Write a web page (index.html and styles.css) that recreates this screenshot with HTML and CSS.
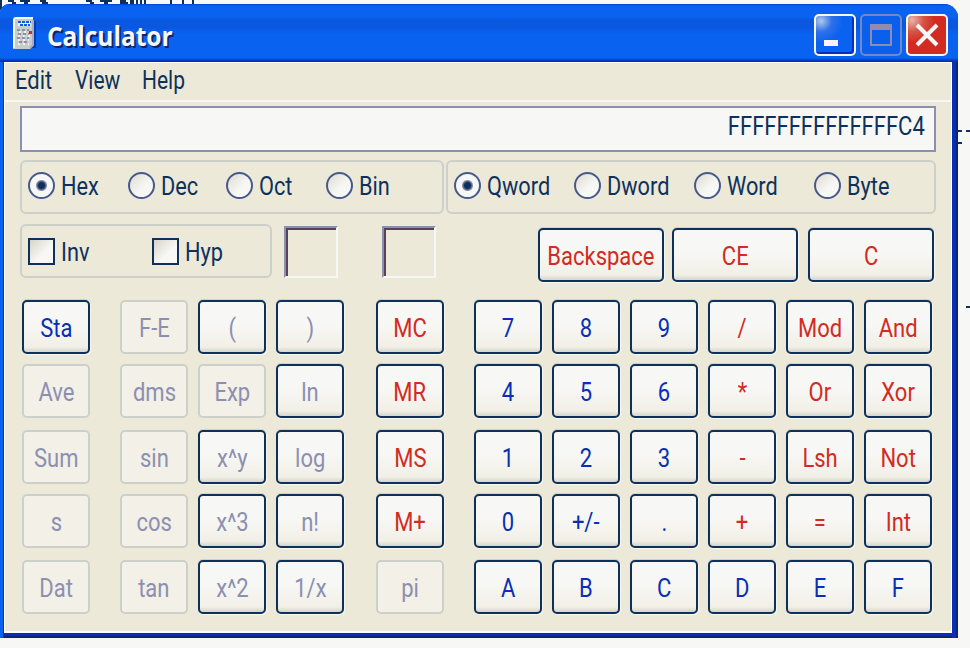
FILE: index.html
```
<!DOCTYPE html>
<html lang="en">
<head>
<meta charset="utf-8">
<title>Calculator</title>
<link rel="stylesheet" href="styles.css">
</head>
<body>
<svg class="backdrop" width="970" height="648" viewBox="0 0 970 648" shape-rendering="crispEdges"><path d="M0 0h2v10h-2zM8 0h6v2h-6zM12 2h4v2h-4zM20 0h10v2h-10zM24 2h4v2h-4zM40 0h6v2h-6zM42 2h6v2h-6zM86 0h6v2h-6zM90 2h4v2h-4zM100 0h12v2h-12zM104 2h4v2h-4zM120 0h6v4h-6zM122 2h6v2h-6zM130 0h4v4h-4zM136 0h2v4h-2zM140 0h2v4h-2zM144 0h2v4h-2zM170 0h2v4h-2zM182 0h2v4h-2zM192 0h2v4h-2zM958 130h4v2h-4zM966 130h4v2h-4zM958 142h4v2h-4zM966 306h4v2h-4z" fill="#0e315c"/></svg>
<main class="window">
<header class="titlebar">
<svg class="appicon" width="25" height="34" viewBox="0 0 25 34"><path d="M4 4H24V31H4Z" fill="#0a3ab8"/><path d="M2 3Q2 1 4 1H21V28L18 32H1Z" fill="#c8cccb"/><path d="M2 31V3Q2 1 4 1H21" fill="none" stroke="#f7f7f5" stroke-width="2"/><path d="M21 3V28L18 31" fill="none" stroke="#a9adba" stroke-width="2"/><path d="M6 4H19V9H6Z" fill="#eef2f5"/><path d="M6 5H19M8 8H18" stroke="#0b5ce8" stroke-width="2" stroke-dasharray="3 1"/><path d="M5 13H17M6 17H17M5 21H17M7 25H17" stroke="#8b90ae" stroke-width="2" stroke-dasharray="3 2"/><path d="M7 15H17M6 19H19M6 23H17M6 27H17" stroke="#f0f0ee" stroke-width="2" stroke-dasharray="2 3"/><path d="M17 14h3v3h-3z" fill="#d12b22"/></svg>
<h1>Calculator</h1>
<div class="controls">
<button class="ctl" aria-label="Minimize"><svg width="38" height="38"><path d="M8 24h14v6H8z" fill="#f7f7f5"/></svg></button>
<button class="ctl max" aria-label="Maximize"><svg width="38" height="38"><path d="M8 8h22v6H8z" fill="#8c8fac"/><path d="M9 12v17h20V12" fill="none" stroke="#8c8fac" stroke-width="2"/></svg></button>
<button class="ctl close" aria-label="Close"><svg width="38" height="38"><path d="M9 9L29 29M29 9L9 29" stroke="#f7f7f5" stroke-width="4"/></svg></button>
</div>
</header>
<div class="body">
<nav class="menu"><span class="t">Edit</span><span class="t">View</span><span class="t">Help</span></nav>
<div class="display"><span class="t">FFFFFFFFFFFFFFC4</span></div>
<div class="modes">
<div class="group base"><label><i class="radio on"></i><span class="t">Hex</span></label><label><i class="radio"></i><span class="t">Dec</span></label><label><i class="radio"></i><span class="t">Oct</span></label><label><i class="radio"></i><span class="t">Bin</span></label></div>
<div class="group size"><label><i class="radio on"></i><span class="t">Qword</span></label><label><i class="radio"></i><span class="t">Dword</span></label><label><i class="radio"></i><span class="t">Word</span></label><label><i class="radio"></i><span class="t">Byte</span></label></div>
</div>
<div class="tools">
<div class="group flags"><label><i class="check"></i><span class="t">Inv</span></label><label><i class="check"></i><span class="t">Hyp</span></label></div>
<i class="well"></i><i class="well second"></i>
<div class="edit"><button class="key red"><span>Backspace</span></button><button class="key red"><span>CE</span></button><button class="key red"><span>C</span></button></div>
</div>
<div class="keys">
<button class="key"><span>Sta</span></button><button class="key off"><span>F-E</span></button><button class="key dim"><span>(</span></button><button class="key dim"><span>)</span></button><button class="key red"><span>MC</span></button><button class="key"><span>7</span></button><button class="key"><span>8</span></button><button class="key"><span>9</span></button><button class="key red"><span>/</span></button><button class="key red"><span>Mod</span></button><button class="key red"><span>And</span></button>
<button class="key off"><span>Ave</span></button><button class="key off"><span>dms</span></button><button class="key off"><span>Exp</span></button><button class="key dim"><span>ln</span></button><button class="key red"><span>MR</span></button><button class="key"><span>4</span></button><button class="key"><span>5</span></button><button class="key"><span>6</span></button><button class="key red"><span>*</span></button><button class="key red"><span>Or</span></button><button class="key red"><span>Xor</span></button>
<button class="key off"><span>Sum</span></button><button class="key off"><span>sin</span></button><button class="key dim"><span>x^y</span></button><button class="key dim"><span>log</span></button><button class="key red"><span>MS</span></button><button class="key"><span>1</span></button><button class="key"><span>2</span></button><button class="key"><span>3</span></button><button class="key red"><span>-</span></button><button class="key red"><span>Lsh</span></button><button class="key red"><span>Not</span></button>
<button class="key off"><span>s</span></button><button class="key off"><span>cos</span></button><button class="key dim"><span>x^3</span></button><button class="key dim"><span>n!</span></button><button class="key red"><span>M+</span></button><button class="key"><span>0</span></button><button class="key"><span>+/-</span></button><button class="key"><span>.</span></button><button class="key red"><span>+</span></button><button class="key red"><span>=</span></button><button class="key red"><span>Int</span></button>
<button class="key off"><span>Dat</span></button><button class="key off"><span>tan</span></button><button class="key dim"><span>x^2</span></button><button class="key dim"><span>1/x</span></button><button class="key off"><span>pi</span></button><button class="key"><span>A</span></button><button class="key"><span>B</span></button><button class="key"><span>C</span></button><button class="key"><span>D</span></button><button class="key"><span>E</span></button><button class="key"><span>F</span></button>
</div>
</div>
</main>
</body>
</html>
```
FILE: styles.css
```
* { box-sizing: border-box; }
body { margin: 0; padding-top: 4px; width: 970px; height: 648px; overflow: hidden; background: #f7f7f5; color: #0e315c; font: 25px/30px Roboto, "Liberation Sans", sans-serif; }
button { padding: 0; font: inherit; }
.backdrop { position: absolute; left: 0; top: 0; }
.window { position: relative; width: 958px; height: 634px; display: flex; flex-direction: column; padding: 0 6px 5px 4px; border-radius: 9px 14px 0 0; background: linear-gradient(90deg, #0a62f0 0 3px, #082fb5 3px 4px, transparent 4px 952px, #082fb5 952px 956px, #0a2676 956px), linear-gradient(#0a62f0 0 57px, #082fb5 57px 632px, #0a2676 632px); }
.titlebar { height: 58px; flex: none; margin: 0 -6px 0 -4px; display: flex; align-items: center; padding: 3px 10px 0 12px; border-radius: 9px 14px 0 0; background: linear-gradient(#0840d0 0, #0a62f0 2px, #0a62f0 13px, #0a57e0 16px 23px, #0a62f0 30px 54px, #082fb5 57px); }
.appicon { flex: none; margin-top: -2px; }
h1 { margin: 3px 0 0 10px; font: 700 26px/32px "Open Sans", sans-serif; color: #f7f7f5; text-shadow: 2px 2px 0 #0e2370; transform: scaleX(.94); transform-origin: left; }
.controls { margin-left: auto; display: flex; gap: 4px; }
.ctl { width: 42px; height: 42px; display: flex; border: 2px solid #f7f7f5; border-radius: 5px; background: radial-gradient(circle at 5px 5px, #b3c8e8 0, #2d70ea 11px, #0a62f0 22px); box-shadow: inset -2px -2px #082fb5; }
.ctl.max { border-color: #7188cb; background: #0a5fec; box-shadow: none; }
.ctl.close { background: radial-gradient(circle at 4px 4px, #e8b5a9 0, #d65343 12px, #d12b22 23px); box-shadow: none; }
.body { flex: 1; display: flex; flex-direction: column; border: solid #fff; border-width: 1px 1px 2px; background: #ece9d8; padding: 0 15px; }
.t { transform: translateY(1px) scaleX(.88); transform-origin: left; white-space: nowrap; }
.menu { height: 39px; flex: none; margin: 0 -15px; padding: 2px 0 0 10px; display: flex; border-bottom: 2px solid #f7f7f5; }
.menu .t { width: 60px; }
.menu .t + .t { width: 67px; transform: translateY(1px) scaleX(.84); }
.display { height: 46px; margin-top: 4px; border: 2px solid #8c8fb0; background: #f7f7f5; text-align: right; padding: 3px 9px; }
.display .t { display: inline-block; transform-origin: right; }
.modes { display: flex; gap: 2px; margin-top: 8px; }
.group { height: 54px; border: 2px solid #cdd0c8; border-radius: 6px; display: flex; padding: 0 0 4px 6px; }
.group label { display: flex; align-items: center; gap: 6px; }
.group .t { transform: translateY(2px) scaleX(.87); }
.base { width: 424px; }
.base label { width: 100px; }
.base label:nth-child(2) { width: 98px; }
.size { width: 490px; }
.size label { width: 120px; }
.radio { flex: none; width: 27px; height: 27px; border: 2px solid #47598a; border-radius: 50%; background: linear-gradient(135deg, #dedcd0, #f7f7f5 60%); }
.radio.on { background: radial-gradient(circle, #0e315c 0 3px, #8c8fb0 5px, #f7f7f5 6px); }
.tools { display: flex; margin-top: 10px; height: 58px; }
.flags { width: 252px; padding-bottom: 0; }
.flags label { flex: none; width: 124px; }
.check { flex: none; width: 27px; height: 27px; border: 2px solid #0e315c; background: linear-gradient(135deg, #d6d5ca, #f7f7f5 60%); }
.well { width: 54px; height: 52px; margin: 2px 0 0 12px; border: solid #8c8fb0; border-width: 2px; border-right-color: #f7f7f5; border-bottom-color: #f7f7f5; box-shadow: inset 2px 2px #5b405c; }
.well.second { margin-left: 44px; }
.edit { margin: 4px 0 0 102px; display: flex; gap: 8px; }
.edit .key { width: 126px; }
.edit .key:last-child { margin-left: 2px; }
.key { height: 54px; display: flex; align-items: center; justify-content: center; border: 2px solid #0e315c; border-radius: 5px; color: #082fb5; background: linear-gradient(#f7f7f5 0 45%, #f1efe6 90%, #d4d5cc); box-shadow: 0 -1px 1px #cfd0c7, 1px 1px 1px #faf9f3; }
.key span { transform: translateY(2px) scaleX(.88); }
.red { color: #d12b22; }
.dim, .off { color: #8c8fb0; }
.off { border-color: #cdd0c8; background: #f2f0e7; box-shadow: none; }
.keys { margin: 18px 0 0 2px; display: grid; grid-template-columns: 98px 78px 78px 100px 98px 78px 78px 78px 78px 78px 68px; grid-template-rows: 64px 66px 64px 66px 54px; }
.keys .key { width: 68px; }
```
